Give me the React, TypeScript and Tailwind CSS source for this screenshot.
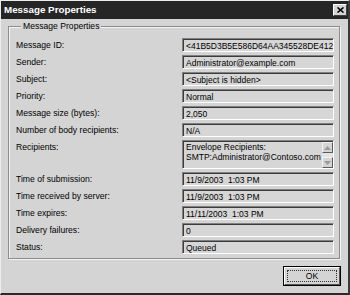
import React from "react";

const font = { fontFamily: '"Liberation Sans", Arial, sans-serif' };

const rows: { label: string; value: string }[] = [
  { label: "Message ID:", value: "<41B5D3B5E586D64AA345528DE412" },
  { label: "Sender:", value: "Administrator@example.com" },
  { label: "Subject:", value: "<Subject is hidden>" },
  { label: "Priority:", value: "Normal" },
  { label: "Message size (bytes):", value: "2,050" },
  { label: "Number of body recipients:", value: "N/A" },
];

const rowsAfter: { label: string; value: string }[] = [
  { label: "Time of submission:", value: "11/9/2003  1:03 PM" },
  { label: "Time received by server:", value: "11/9/2003  1:03 PM" },
  { label: "Time expires:", value: "11/11/2003  1:03 PM" },
  { label: "Delivery failures:", value: "0" },
  { label: "Status:", value: "Queued" },
];

const Field = ({ value }: { value: string }) => (
  <div className="h-[14px] border border-t-[#808080] border-l-[#808080] border-b-white border-r-white shadow-[inset_1px_1px_0_#3c3c3c] bg-[#d6d6d6] pl-[3px] pt-[1px] overflow-hidden whitespace-pre text-[8.5px] leading-[12px] text-black">
    {value}
  </div>
);

const Row = ({ label, value }: { label: string; value: string }) => (
  <>
    <div className="h-[14px] text-[8.6px] leading-[14px] text-black">{label}</div>
    <Field value={value} />
  </>
);

const ScrollBtn = ({ up }: { up?: boolean }) => (
  <div className="w-[11px] h-[11px] bg-[#d4d4d4] border border-t-[#f2f2f2] border-l-[#f2f2f2] border-b-[#5a5a5a] border-r-[#5a5a5a] flex items-center justify-center">
    <svg width="7" height="4" viewBox="0 0 7 4">
      {up ? (
        <polygon points="3.5,0 7,4 0,4" fill="#9a9a9a" />
      ) : (
        <polygon points="0,0 7,0 3.5,4" fill="#9a9a9a" />
      )}
    </svg>
  </div>
);

const App = () => {
  return (
    <div
      className="w-[350px] h-[295px] bg-[#d4d4d4] border-t border-l border-t-[#ececec] border-l-[#ececec] border-r-2 border-b-2 border-r-[#3a3a3a] border-b-[#2a2a2a] flex flex-col"
      style={font}
    >
      {/* title bar */}
      <div className="h-[18px] bg-[#262626] flex items-center justify-between pl-[3px] pr-[1px]">
        <span className="text-white font-bold text-[9.8px] leading-[12px]">Message Properties</span>
        <div className="w-[14px] h-[12px] bg-[#d4d4d4] border border-t-white border-l-white border-b-[#404040] border-r-[#404040] flex items-center justify-center">
          <svg width="7" height="6" viewBox="0 0 7 6">
            <path d="M0.5 0.5 L6.5 5.5 M6.5 0.5 L0.5 5.5" stroke="#000" strokeWidth="1.6" />
          </svg>
        </div>
      </div>

      <div className="flex-1 flex flex-col pt-[2px]">
        <fieldset className="ml-[7px] w-[332px] border border-[#8c8c8c] shadow-[1px_1px_0_#f4f4f4,inset_1px_1px_0_#f4f4f4] pl-[7px] pr-[4px] pb-[4px]">
          <legend className="ml-[5px] px-[2px] bg-[#d4d4d4] text-[8.6px] leading-[11px] text-black">
            Message Properties
          </legend>
          <div className="grid grid-cols-[166px_152px] gap-y-[3px] pt-[6px]">
            {rows.map((r) => (
              <Row key={r.label} label={r.label} value={r.value} />
            ))}
            <div className="text-[8.6px] leading-[12px] pt-[1px] text-black">Recipients:</div>
            <div className="h-[29px] border border-t-[#808080] border-l-[#808080] border-b-white border-r-white shadow-[inset_1px_1px_0_#3c3c3c] bg-[#d6d6d6] flex">
              <div className="flex-1 overflow-hidden whitespace-nowrap pl-[3px] pt-[1px] text-[8.5px] leading-[10px] text-black">
                <div>Envelope Recipients:</div>
                <div>SMTP:Administrator@Contoso.com</div>
              </div>
              <div className="w-[11px] mt-[1px] flex flex-col justify-between bg-[#e4e4e4]">
                <ScrollBtn up />
                <ScrollBtn />
              </div>
            </div>
            {rowsAfter.map((r) => (
              <Row key={r.label} label={r.label} value={r.value} />
            ))}
          </div>
        </fieldset>

        <div className="flex justify-end pr-[7px] pt-[7px]">
          <button className="w-[58px] h-[20px] border border-black bg-[#d4d4d4] p-0">
            <div className="w-full h-full border border-t-white border-l-white border-b-[#555] border-r-[#555] p-[2px]">
              <div className="w-full h-full border border-dotted border-[#333] flex items-center justify-center text-[8.6px] leading-[10px] text-black">
                OK
              </div>
            </div>
          </button>
        </div>
      </div>
    </div>
  );
};

export default App;
